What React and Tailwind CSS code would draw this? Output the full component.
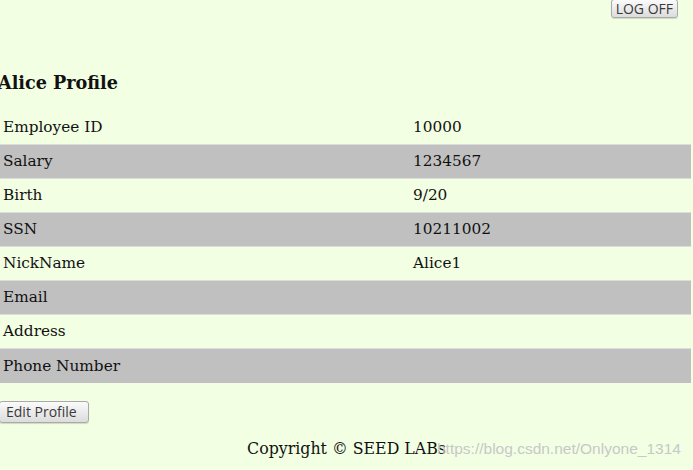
import React from 'react';

const rows = [
  ['Employee ID', '10000'],
  ['Salary', '1234567'],
  ['Birth', '9/20'],
  ['SSN', '10211002'],
  ['NickName', 'Alice1'],
  ['Email', ''],
  ['Address', ''],
  ['Phone Number', ''],
];

const btn =
  "rounded-[3px] border border-[#a9a9a9] bg-gradient-to-b from-[#fbfbfb] to-[#dcdcdc] text-[#3a3a3a] text-[14px] leading-none font-['Open_Sans',sans-serif] shadow-[0_1px_1px_rgba(0,0,0,0.15)]";

export default function App() {
  return (
    <div className="relative w-[693px] h-[470px] overflow-hidden bg-[#f2ffe3] font-['DejaVu_Serif',serif] text-[#111]">
      {/* top bar */}
      <div className="flex justify-end pr-[15px]">
        <button className={`${btn} h-[19px] px-[4px] -mt-px`}>LOG OFF</button>
      </div>

      <h2 className="mt-[53px] -ml-[2px] text-[17.6px] font-bold leading-[24px]">Alice Profile</h2>

      <div className="mt-[16px] w-[691px]">
        {rows.map(([k, v], i) => (
          <div
            key={k}
            className={`grid grid-cols-[409px_1fr] items-center h-[34px] text-[15.3px] ${
              i < rows.length - 1 ? 'border-b border-[#dcdcdc]' : ''
            } ${i % 2 === 1 ? 'bg-[#c0c0c0]' : ''}`}
          >
            <div className="pl-[3px]">{k}</div>
            <div className="pl-[4px]">{v}</div>
          </div>
        ))}
      </div>

      <div className="mt-[17px]">
        <button className={`${btn} h-[22px] pl-[6px] pr-[11px] -ml-px`}>Edit Profile</button>
      </div>

      <p className="mt-[13px] text-center text-[15.8px]">Copyright © SEED LABs</p>

      <span className="absolute left-[437px] top-[437px] text-[15.5px] text-[#c8c8c8] font-['Liberation_Sans',sans-serif]">
        https://blog.csdn.net/Onlyone_1314
      </span>
    </div>
  );
}
